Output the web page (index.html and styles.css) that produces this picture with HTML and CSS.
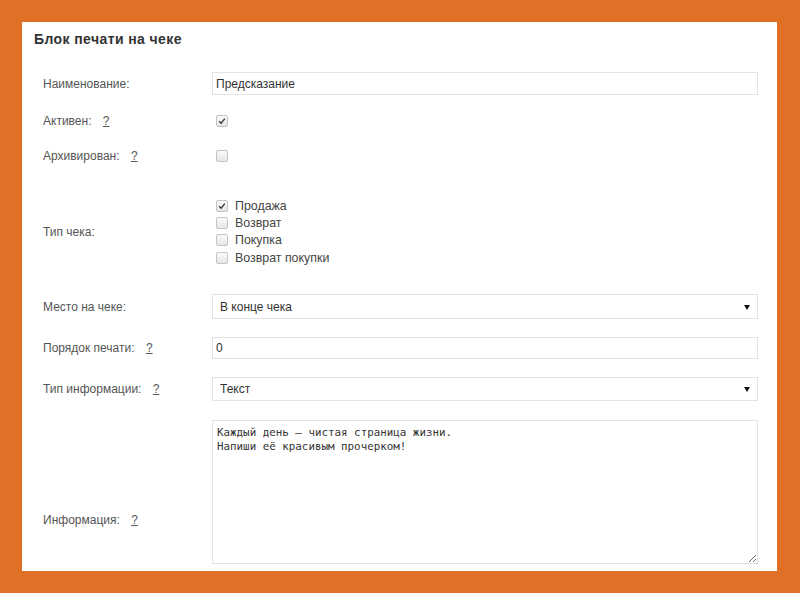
FILE: index.html
```html
<!DOCTYPE html>
<html lang="ru">
<head>
<meta charset="utf-8">
<title>Блок печати на чеке</title>
<link rel="stylesheet" href="styles.css">
</head>
<body>
<div class="card">
  <h1 class="title">Блок печати на чеке</h1>
  <div class="form">
    <div class="row r-name">
      <div class="label">Наименование:</div>
      <div class="field"><input class="text" type="text" value="Предсказание"></div>
    </div>
    <div class="row r-active">
      <div class="label">Активен: <a class="help" href="#">?</a></div>
      <div class="field pad"><span class="cb checked"><svg viewBox="0 0 12 12"><path d="M2.6 6.2 L4.9 8.6 L9.4 3.2" /></svg></span></div>
    </div>
    <div class="row r-arch">
      <div class="label">Архивирован: <a class="help" href="#">?</a></div>
      <div class="field pad"><span class="cb"></span></div>
    </div>
    <div class="row r-type">
      <div class="label">Тип чека:</div>
      <div class="field pad">
        <div class="cblist">
          <div class="item"><span class="cb checked"><svg viewBox="0 0 12 12"><path d="M2.6 6.2 L4.9 8.6 L9.4 3.2" /></svg></span><span>Продажа</span></div>
          <div class="item"><span class="cb"></span><span>Возврат</span></div>
          <div class="item"><span class="cb"></span><span>Покупка</span></div>
          <div class="item"><span class="cb"></span><span>Возврат покупки</span></div>
        </div>
      </div>
    </div>
    <div class="row r-place">
      <div class="label">Место на чеке:</div>
      <div class="field">
        <div class="selectwrap h25">
          <select class="select"><option>В конце чека</option></select>
          <svg class="arrow" viewBox="0 0 6 5"><path d="M0 0 H6 L3 5 Z"/></svg>
        </div>
      </div>
    </div>
    <div class="row r-order">
      <div class="label">Порядок печати: <a class="help" href="#">?</a></div>
      <div class="field"><input class="text h22" type="text" value="0"></div>
    </div>
    <div class="row r-info-type">
      <div class="label">Тип информации: <a class="help" href="#">?</a></div>
      <div class="field">
        <div class="selectwrap h24">
          <select class="select"><option>Текст</option></select>
          <svg class="arrow" viewBox="0 0 6 5"><path d="M0 0 H6 L3 5 Z"/></svg>
        </div>
      </div>
    </div>
    <div class="row r-info">
      <div class="label low">Информация: <a class="help" href="#">?</a></div>
      <div class="field"><textarea class="area">Каждый день – чистая страница жизни.
Напиши её красивым прочерком!</textarea></div>
    </div>
  </div>
</div>
</body>
</html>
```

FILE: styles.css
```css
html, body {
  margin: 0;
  padding: 0;
}
body {
  background: #e07025;
  padding: 22px 23px 21px 22px;
  font-family: "Liberation Sans", Arial, sans-serif;
}
.card {
  background: #ffffff;
  width: 755px;
  padding: 9px 0 7px 0;
  box-sizing: border-box;
}
.title {
  margin: 0;
  padding: 0 12px;
  font-size: 14px;
  line-height: 16px;
  font-weight: bold;
  letter-spacing: 0.4px;
  color: #333333;
}
.form {
  padding: 0 19px 0 21px;
}
.row {
  display: flex;
  align-items: center;
}
.label {
  width: 169px;
  flex: none;
  font-size: 12px;
  line-height: 16px;
  color: #555555;
}
.help {
  color: #555555;
  text-decoration: underline;
  margin-left: 8px;
}
.field {
  flex: 1;
  min-width: 0;
}
.field.pad {
  padding-left: 4px;
}
.r-name { margin-top: 25px; }
.r-active { margin-top: 16px; height: 20px; }
.r-arch { margin-top: 15px; height: 20px; }
.r-type { margin-top: 31px; }
.r-place { margin-top: 28px; }
.r-order { margin-top: 18px; }
.r-info-type { margin-top: 18px; }
.r-info { margin-top: 19px; align-items: flex-start; }
.label.low { padding-top: 92px; }

.text {
  display: block;
  width: 100%;
  height: 23px;
  box-sizing: border-box;
  border: 1px solid #e3e3e3;
  padding: 0 3px;
  font-family: "Liberation Sans", Arial, sans-serif;
  font-size: 12px;
  color: #333333;
  background: #ffffff;
  outline: none;
  margin: 0;
}
.text.h22 { height: 22px; }

.selectwrap {
  position: relative;
}
.select {
  display: block;
  width: 100%;
  height: 100%;
  box-sizing: border-box;
  appearance: none;
  -webkit-appearance: none;
  border: 1px solid #e3e3e3;
  border-radius: 0;
  background: #ffffff;
  padding: 0 7px;
  font-family: "Liberation Sans", Arial, sans-serif;
  font-size: 12px;
  color: #333333;
  outline: none;
  margin: 0;
}
.selectwrap.h25 { height: 25px; }
.selectwrap.h24 { height: 24px; }
.arrow {
  position: absolute;
  right: 8px;
  top: 50%;
  width: 6px;
  height: 5px;
  margin-top: -2px;
  fill: #111111;
}

.cb {
  display: inline-block;
  width: 12px;
  height: 12px;
  box-sizing: border-box;
  border: 1px solid #c4c4c4;
  border-radius: 2px;
  background: linear-gradient(#fbfbfb, #e6e6e6);
  vertical-align: middle;
  flex: none;
}
.cb svg {
  display: block;
  width: 10px;
  height: 10px;
  fill: none;
  stroke: #3a3a3a;
  stroke-width: 1.7;
}
.r-active .field, .r-arch .field {
  display: flex;
  align-items: center;
}
.cblist {
  display: flex;
  flex-direction: column;
}
.item {
  display: flex;
  align-items: center;
  height: 17.3px;
  gap: 7px;
  font-size: 12.4px;
  color: #444444;
}

.area {
  display: block;
  width: 100%;
  height: 144px;
  box-sizing: border-box;
  border: 1px solid #e3e3e3;
  padding: 5px 4px;
  font-family: "DejaVu Sans Mono", "Liberation Mono", monospace;
  font-size: 10.85px;
  line-height: 14px;
  color: #333333;
  background: #ffffff;
  outline: none;
  margin: 0;
}
```
